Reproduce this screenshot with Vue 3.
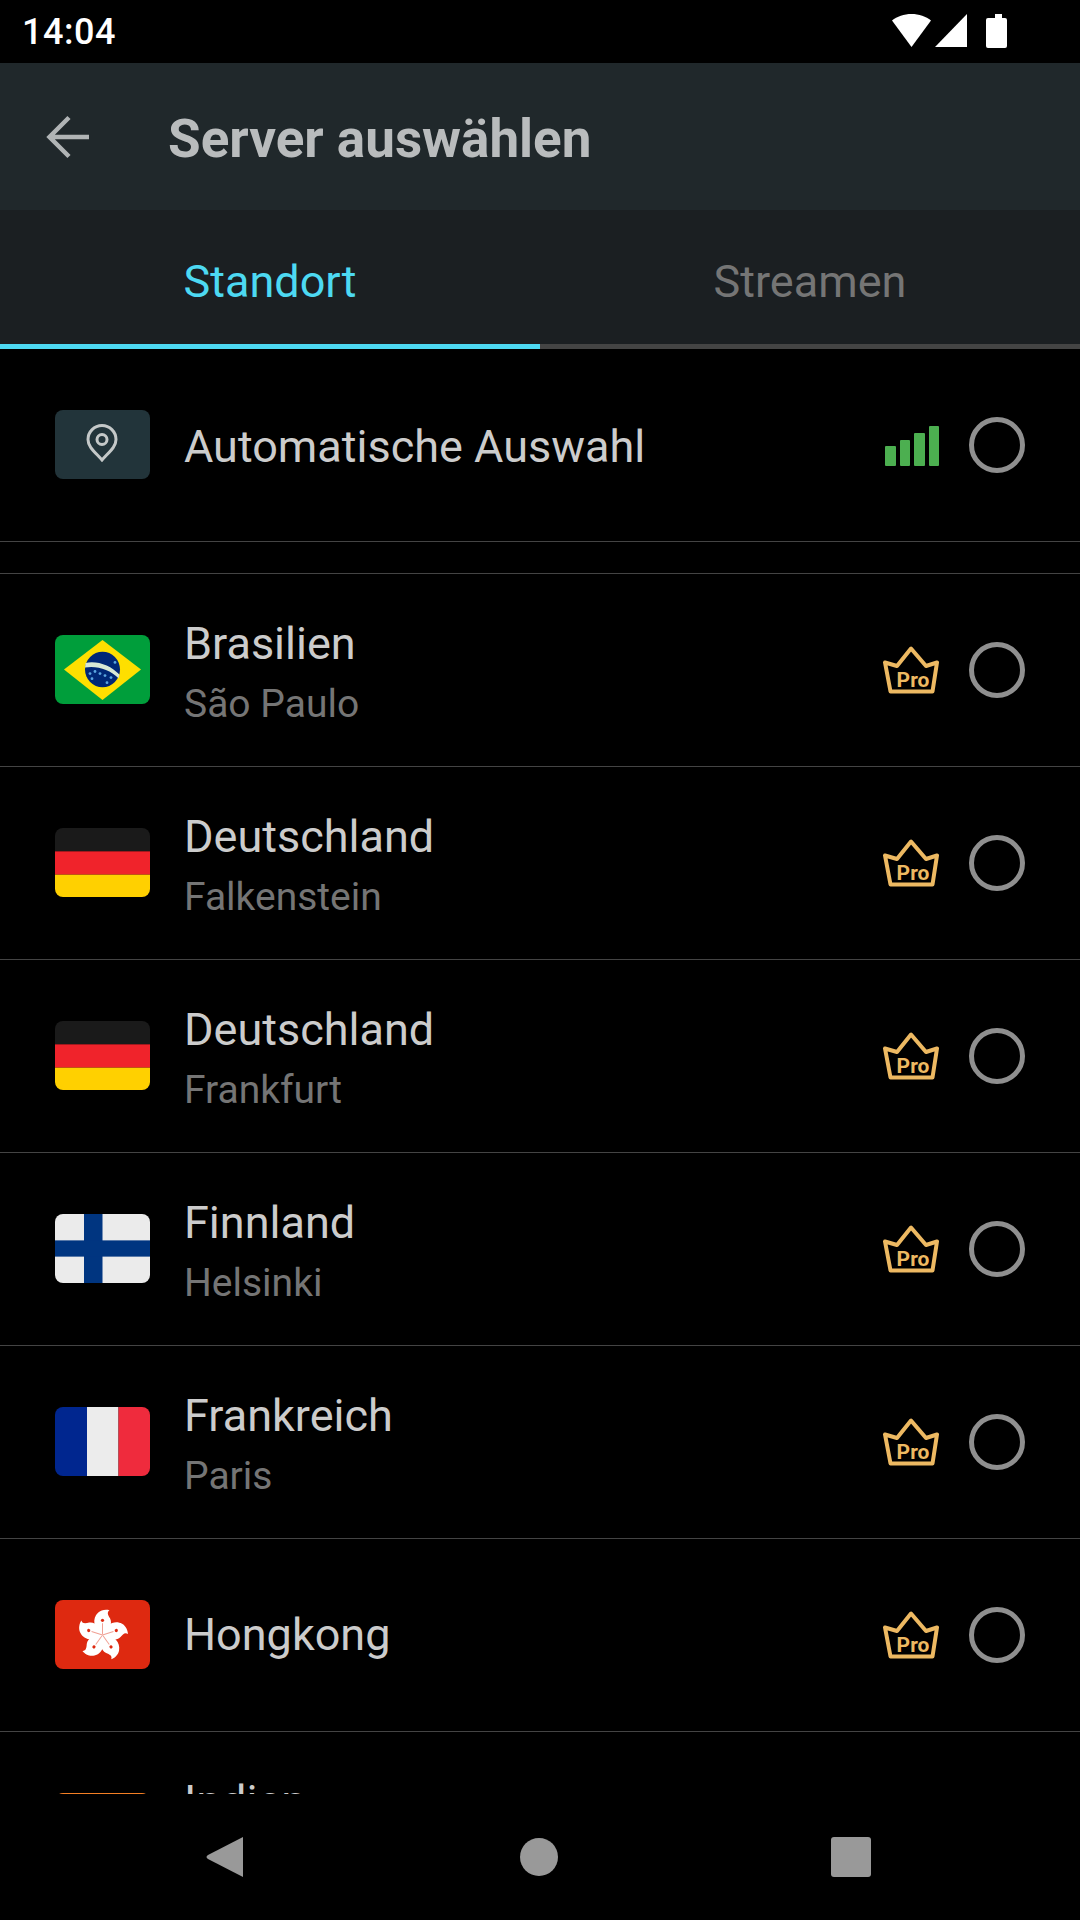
<template>
  <div class="screen">
    <div class="status-bar">
      <span class="status-bar__time">14:04</span>
      <svg class="status-bar__icons" width="116" height="36" viewBox="0 0 116 36">
        <path d="M0 7.5C5 3.5 12 1 19.5 1S34 3.5 39 7.5L19.5 34Z" fill="#fff" />
        <path d="M75 1V34H43Z" fill="#fff" />
        <path d="M100 5h3V1h7v4h3a2 2 0 0 1 2 2v26a2 2 0 0 1-2 2H96a2 2 0 0 1-2-2V7a2 2 0 0 1 2-2Z" fill="#fff" />
      </svg>
    </div>

    <div class="toolbar">
      <svg class="toolbar__back" width="44" height="44" viewBox="0 0 44 44" fill="none">
        <path d="M43 22H4M23 2.5 3.500 22 23 41.500" stroke="#b0b4b5" stroke-width="4.500" />
      </svg>
      <span class="toolbar__title">Server auswählen</span>
    </div>

    <div class="tabs">
      <div class="tab tab--active">Standort</div>
      <div class="tab">Streamen</div>
    </div>

    <div class="list">
      <div class="row">
        <div class="flag flag--auto">
          <svg width="32" height="38" viewBox="0 0 32 38" fill="none">
            <path d="M16 36C9 28 2 23 2 15.500a14 14 0 0 1 28 0C30 23 23 28 16 36Z" stroke="#c4c8c8" stroke-width="3" />
            <circle cx="16" cy="15.500" r="5" stroke="#c4c8c8" stroke-width="3" />
          </svg>
        </div>
        <div class="row__text">
          <div class="row__name row__name--auto">Automatische Auswahl</div>
        </div>
        <div class="signal">
          <span v-for="h in signalBars" :key="h" class="signal__bar" :style="{ height: h + 'px' }"></span>
        </div>
        <span class="radio"></span>
      </div>
      <div class="spacer"></div>

      <div v-for="server in servers" :key="server.name + server.city" class="row">
        <div class="flag">
          <svg width="95" height="69" viewBox="0 0 95 68" preserveAspectRatio="none">
            <template v-if="server.flag === 'br'">
              <rect width="95" height="68" fill="#009e3b" />
              <path d="M9 34 47.500 5 86 34 47.500 64Z" fill="#fedf00" />
              <circle cx="47.500" cy="34" r="17.500" fill="#002776" />
              <path d="M30.600 27.500C42 25 56 30 64.400 39L63.500 42.500C55 34 42 30 30 32Z" fill="#d7e8d5" />
              <circle v-for="s in brazilStars" :key="s[0] + '-' + s[1]" :cx="s[0]" :cy="s[1]" r="1.400" fill="#5aa6e0" />
            </template>
            <template v-else-if="server.flag === 'de'">
              <rect width="95" height="23" fill="#1a1a1a" />
              <rect y="23" width="95" height="23" fill="#f0232b" />
              <rect y="46" width="95" height="22" fill="#ffd000" />
            </template>
            <template v-else-if="server.flag === 'fi'">
              <rect width="95" height="68" fill="#ebebeb" />
              <rect x="29" width="18.500" height="68" fill="#003580" />
              <rect y="26" width="95" height="16" fill="#003580" />
            </template>
            <template v-else-if="server.flag === 'fr'">
              <rect width="32" height="68" fill="#00268f" />
              <rect x="32" width="31.500" height="68" fill="#ececec" />
              <rect x="63.500" width="31.500" height="68" fill="#ef2b3d" />
            </template>
            <template v-else-if="server.flag === 'hk'">
              <rect width="95" height="68" fill="#de2910" />
              <g v-for="a in petals" :key="a" :transform="`rotate(${a} 47.500 34.500)`">
                <path d="M47.500 34.500C38 28 37 18 43 12.500C46 9.500 51 9 54.500 10C51.500 12 53 15 55 18C58 24 54 30 47.500 34.500Z" fill="#fff" />
                <circle cx="47.500" cy="20" r="1.600" fill="#de2910" />
                <path d="M47.500 34.500 47.500 23" stroke="#f0a094" stroke-width="1" />
              </g>
            </template>
            <template v-else-if="server.flag === 'in'">
              <rect width="95" height="23" fill="#f47f24" />
              <rect y="23" width="95" height="23" fill="#ececec" />
              <rect y="46" width="95" height="22" fill="#138808" />
            </template>
          </svg>
        </div>
        <div class="row__text">
          <div class="row__name" :class="{ 'row__name--two': server.city }">{{ server.name }}</div>
          <div v-if="server.city" class="row__city">{{ server.city }}</div>
        </div>
        <svg class="crown" width="58" height="50" viewBox="0 0 58 50" fill="none">
          <path
            d="M9.500 46.500H51.500L56 17.500 45 21 30 3.500 16 21 4 17.500Z"
            stroke="#edb962"
            stroke-width="4"
            stroke-linejoin="round"
          />
          <text x="32" y="41.500" text-anchor="middle" class="crown__text">Pro</text>
        </svg>
        <span class="radio"></span>
      </div>
    </div>

    <div class="nav-bar">
      <svg class="nav-bar__icon" width="40" height="44" viewBox="0 0 40 44">
        <path d="M38 2V42L3 24Q0 22 3 20Z" fill="#999" />
      </svg>
      <span class="nav-bar__home"></span>
      <span class="nav-bar__recent"></span>
    </div>
  </div>
</template>

<script setup>
const signalBars = [20, 26, 33, 40];
const petals = [0, 72, 144, 216, 288];
const brazilStars = [
  [35, 38], [40, 36], [45, 38], [50, 40], [56, 42], [37, 43], [52, 47], [60, 27],
];

const servers = [
  { name: "Brasilien", city: "São Paulo", flag: "br" },
  { name: "Deutschland", city: "Falkenstein", flag: "de" },
  { name: "Deutschland", city: "Frankfurt", flag: "de" },
  { name: "Finnland", city: "Helsinki", flag: "fi" },
  { name: "Frankreich", city: "Paris", flag: "fr" },
  { name: "Hongkong", city: "", flag: "hk" },
  { name: "Indien", city: "Bangalore", flag: "in" },
];
</script>

<style>
html,
body {
  margin: 0;
  background: #000000;
}
</style>

<style scoped>
.screen {
  width: 1080px;
  height: 1920px;
  display: flex;
  flex-direction: column;
  background: #000000;
  font-family: Roboto, "Liberation Sans", sans-serif;
  overflow: hidden;
}

.status-bar {
  height: 63px;
  flex: none;
  display: flex;
  align-items: center;
  justify-content: space-between;
  padding: 0 72px 0 22px;
  color: #ffffff;
}

.status-bar__time {
  font-size: 36px;
  font-weight: 500;
  letter-spacing: 0.5px;
}

.status-bar__icons {
  margin-top: -1px;
}

.toolbar {
  height: 147px;
  flex: none;
  display: flex;
  align-items: center;
  padding-left: 46px;
  background: #20282b;
}

.toolbar__title {
  margin-left: 78px;
  padding-top: 5px;
  font-size: 53px;
  font-weight: 700;
  color: #b9bcbd;
}

.tabs {
  height: 139px;
  flex: none;
  display: flex;
  background: #1b1f22;
}

.tab {
  flex: 1;
  display: flex;
  align-items: center;
  justify-content: center;
  padding-top: 8px;
  box-sizing: border-box;
  font-size: 45px;
  color: #757575;
  border-bottom: 5px solid #444444;
}

.tab--active {
  color: #4dd9f2;
  border-bottom-color: #4dd9f2;
}

.list {
  flex: 1;
  min-height: 0;
  overflow: hidden;
}

.row {
  height: 193px;
  box-sizing: border-box;
  display: flex;
  align-items: center;
  padding: 0 55px;
  border-bottom: 1px solid #444444;
}

.spacer {
  height: 32px;
  box-sizing: border-box;
  border-bottom: 1px solid #444444;
}

.flag {
  width: 95px;
  height: 69px;
  flex: none;
  margin-bottom: 1px;
  border-radius: 8px;
  overflow: hidden;
}

.flag svg {
  display: block;
}

.flag--auto {
  display: flex;
  align-items: center;
  justify-content: center;
  background: #22343a;
}

.flag--auto svg {
  margin: -3px 2px 0 0;
}

.row__text {
  flex: 1;
  min-width: 0;
  margin-left: 34px;
}

.row__name {
  font-size: 45px;
  line-height: 56px;
  color: #cccccc;
}

.row__name--two {
  line-height: 68px;
}

.row__name--auto {
  padding-top: 4px;
}

.row__city {
  font-size: 39px;
  line-height: 52px;
  color: #757575;
}

.signal {
  display: flex;
  align-items: flex-end;
  gap: 4px;
  width: 54px;
  height: 40px;
  margin-top: 2px;
}

.signal__bar {
  flex: 1;
  background: #4caf50;
  border-radius: 1px;
}

.crown {
  flex: none;
}

.crown__text {
  font-family: Roboto, "Liberation Sans", sans-serif;
  font-size: 21px;
  font-weight: 700;
  fill: #edb962;
}

.radio {
  width: 56px;
  height: 56px;
  flex: none;
  box-sizing: border-box;
  margin-left: 30px;
  border: 5px solid #8f8f8f;
  border-radius: 50%;
}

.nav-bar {
  height: 126px;
  flex: none;
  display: flex;
  align-items: center;
  background: #000000;
}

.nav-bar__icon {
  margin-left: 205px;
}

.nav-bar__home {
  width: 38px;
  height: 38px;
  margin-left: 275px;
  border-radius: 50%;
  background: #999999;
}

.nav-bar__recent {
  width: 40px;
  height: 40px;
  margin-left: 273px;
  border-radius: 3px;
  background: #999999;
}
</style>
